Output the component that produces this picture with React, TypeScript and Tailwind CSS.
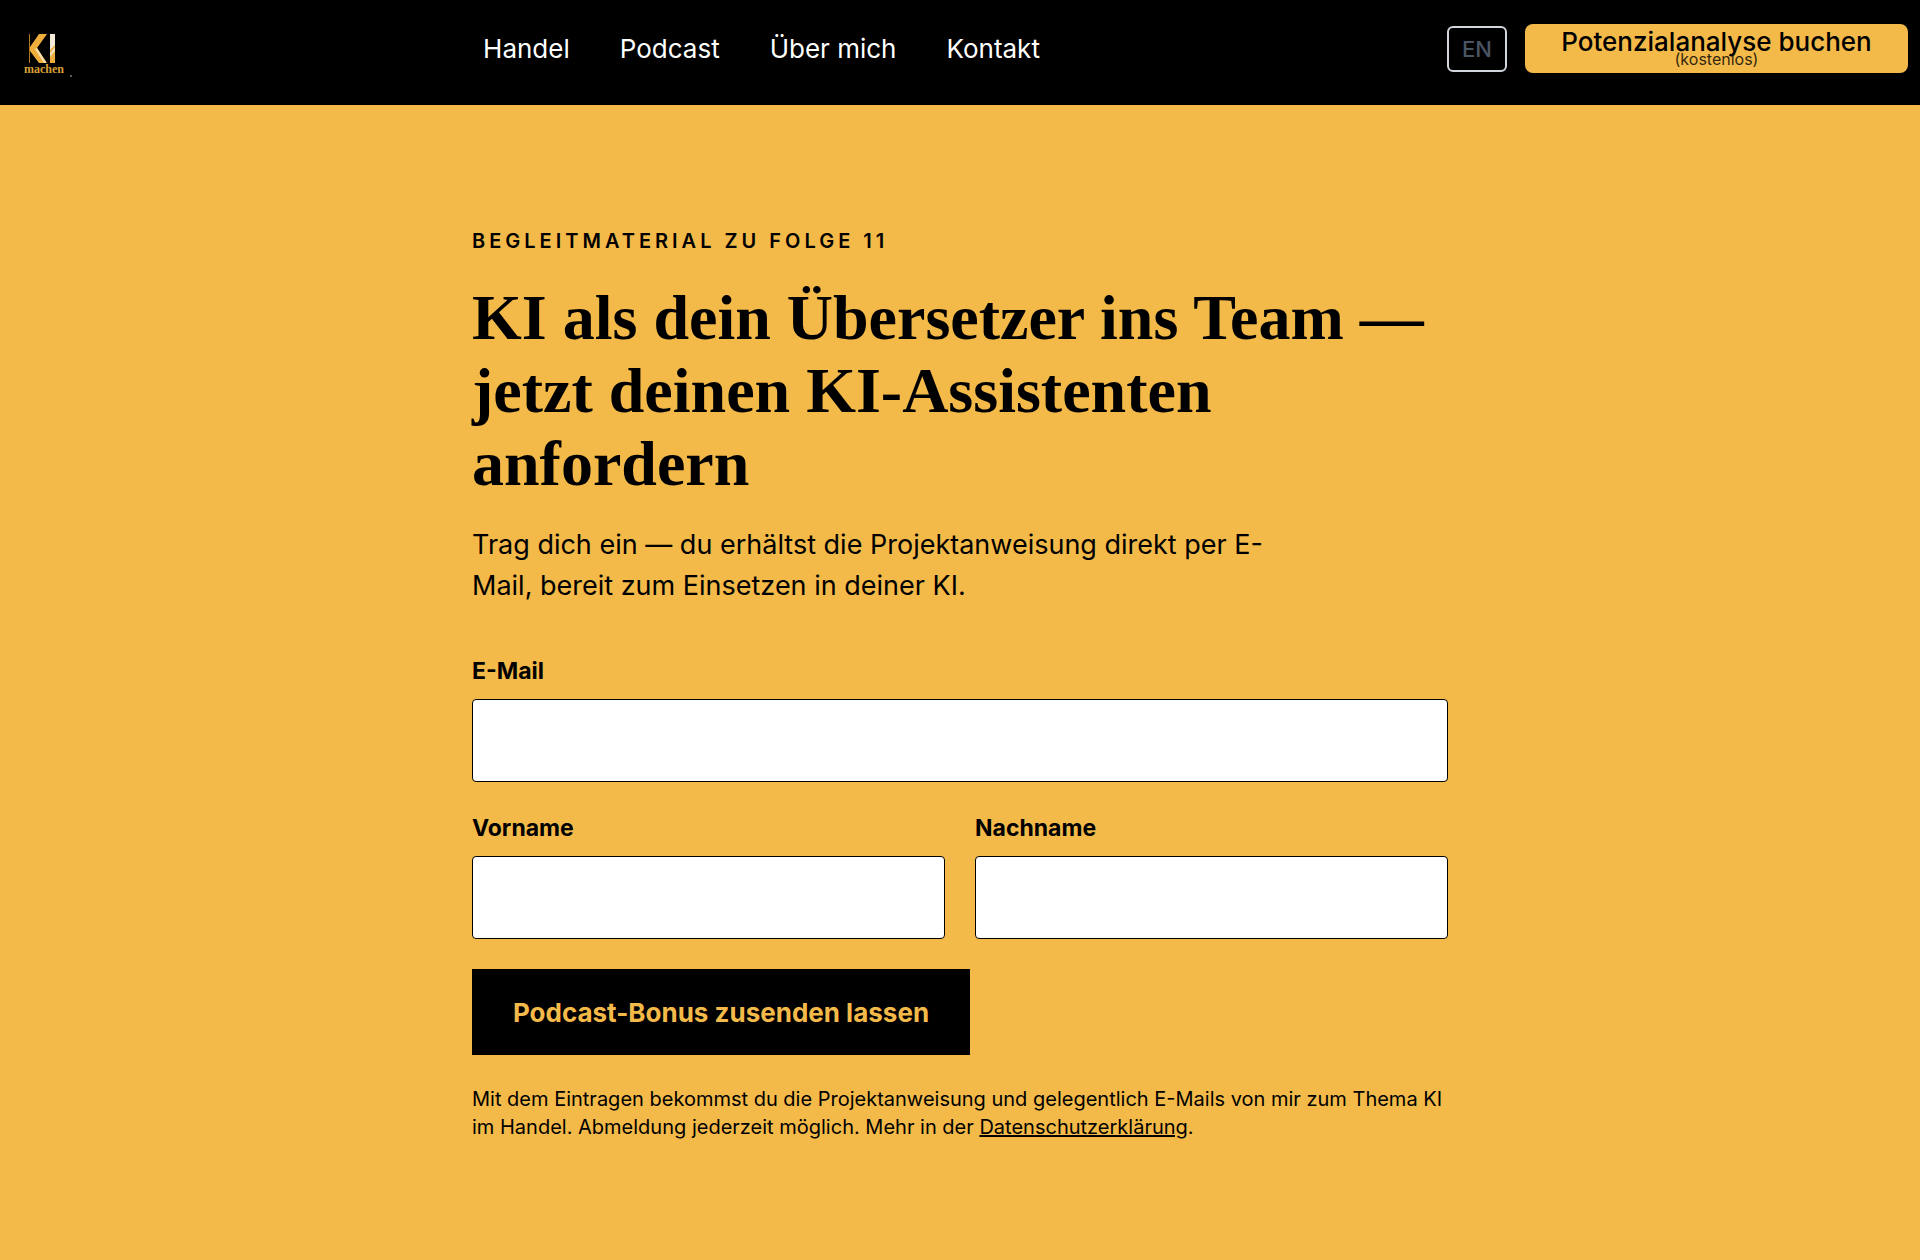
import { useState } from "react";

const NAV_ITEMS = [
  { label: "Handel", href: "#handel" },
  { label: "Podcast", href: "#podcast" },
  { label: "Über mich", href: "#ueber-mich" },
  { label: "Kontakt", href: "#kontakt" },
];

function Logo() {
  return (
    <svg viewBox="0 0 60 60" className="h-[60px] w-[60px]" role="img" aria-label="KI machen">
      <path d="M13 15h1v29h-1z" fill="#b07a22" />
      <path d="M23 15h8L21 29l10 15h-8L14 32v-4z" fill="#efae3c" />
      <path d="M19 30l2-1 9 14v1h-2z" fill="#f7dfb0" />
      <path d="M34 15h5v29h-5z" fill="#efae3c" />
      <path d="M34 15h5v11l-5 5z" fill="#f3ead8" />
      <path d="M34 34l5-6v4l-5 6z" fill="#f3dfb8" />
      <text
        x="8"
        y="54"
        fill="#d99e36"
        fontSize="12"
        fontWeight="700"
        fontFamily="'Liberation Serif', serif"
      >
        machen
      </text>
      <circle cx="55" cy="57" r="1" fill="#777777" />
    </svg>
  );
}

function Header() {
  return (
    <header className="flex h-[105px] items-center justify-between bg-black pr-3 pb-2 pl-4">
      <a href="#start">
        <Logo />
      </a>
      <nav className="flex gap-[50px] text-[26px] leading-8 text-white">
        {NAV_ITEMS.map((item) => (
          <a key={item.href} href={item.href}>
            {item.label}
          </a>
        ))}
      </nav>
      <div className="flex items-center gap-[18px]">
        <button
          type="button"
          className="h-[46px] w-[60px] rounded-md border-2 border-gray-300 text-[22px] leading-none font-medium text-gray-600"
        >
          EN
        </button>
        <button
          type="button"
          className="flex h-[49px] w-[383px] flex-col items-center justify-center rounded-lg bg-[#f4ba49] text-black"
        >
          <span className="text-[26px] leading-5 font-medium">Potenzialanalyse buchen</span>
          <span className="text-base leading-[14px] opacity-80">(kostenlos)</span>
        </button>
      </div>
    </header>
  );
}

interface FieldProps {
  id: string;
  label: string;
  type?: string;
  value: string;
  onChange: (value: string) => void;
}

function Field({ id, label, type = "text", value, onChange }: FieldProps) {
  return (
    <div className="flex flex-col gap-3">
      <label htmlFor={id} className="text-[23px] leading-8 font-bold">
        {label}
      </label>
      <input
        id={id}
        type={type}
        value={value}
        onChange={(e) => onChange(e.target.value)}
        className="h-[83px] w-full rounded-sm border border-black bg-white px-5 text-[23px]"
      />
    </div>
  );
}

export default function App() {
  const [email, setEmail] = useState("");
  const [firstName, setFirstName] = useState("");
  const [lastName, setLastName] = useState("");

  return (
    <div className="min-h-screen bg-[#f4ba49] font-['Inter',sans-serif] text-black">
      <Header />
      <main className="mx-auto max-w-[976px] pt-[120px] pb-20">
        <p className="text-xl leading-8 font-semibold tracking-[0.2em] uppercase">
          Begleitmaterial zu Folge 11
        </p>
        <h1 className="mt-6 font-['Liberation_Serif',serif] text-[64px] leading-[73px] font-bold">
          KI als dein Übersetzer ins Team — jetzt deinen KI-Assistenten anfordern
        </h1>
        <p className="mt-6 max-w-[840px] text-[27px] leading-[41px]">
          Trag dich ein — du erhältst die Projektanweisung direkt per E-Mail, bereit zum Einsetzen in
          deiner KI.
        </p>
        <form className="mt-[49px] flex flex-col gap-[30px]" onSubmit={(e) => e.preventDefault()}>
          <Field id="email" label="E-Mail" type="email" value={email} onChange={setEmail} />
          <div className="grid grid-cols-2 gap-[30px]">
            <Field id="vorname" label="Vorname" value={firstName} onChange={setFirstName} />
            <Field id="nachname" label="Nachname" value={lastName} onChange={setLastName} />
          </div>
          <button
            type="submit"
            className="h-[86px] w-[498px] bg-black text-[26px] font-bold text-[#f4ba49]"
          >
            Podcast-Bonus zusenden lassen
          </button>
        </form>
        <p className="mt-[30px] text-xl leading-7">
          Mit dem Eintragen bekommst du die Projektanweisung und gelegentlich E-Mails von mir zum
          Thema KI im Handel. Abmeldung jederzeit möglich. Mehr in der{" "}
          <a href="#datenschutz" className="underline">
            Datenschutzerklärung
          </a>
          .
        </p>
      </main>
    </div>
  );
}
